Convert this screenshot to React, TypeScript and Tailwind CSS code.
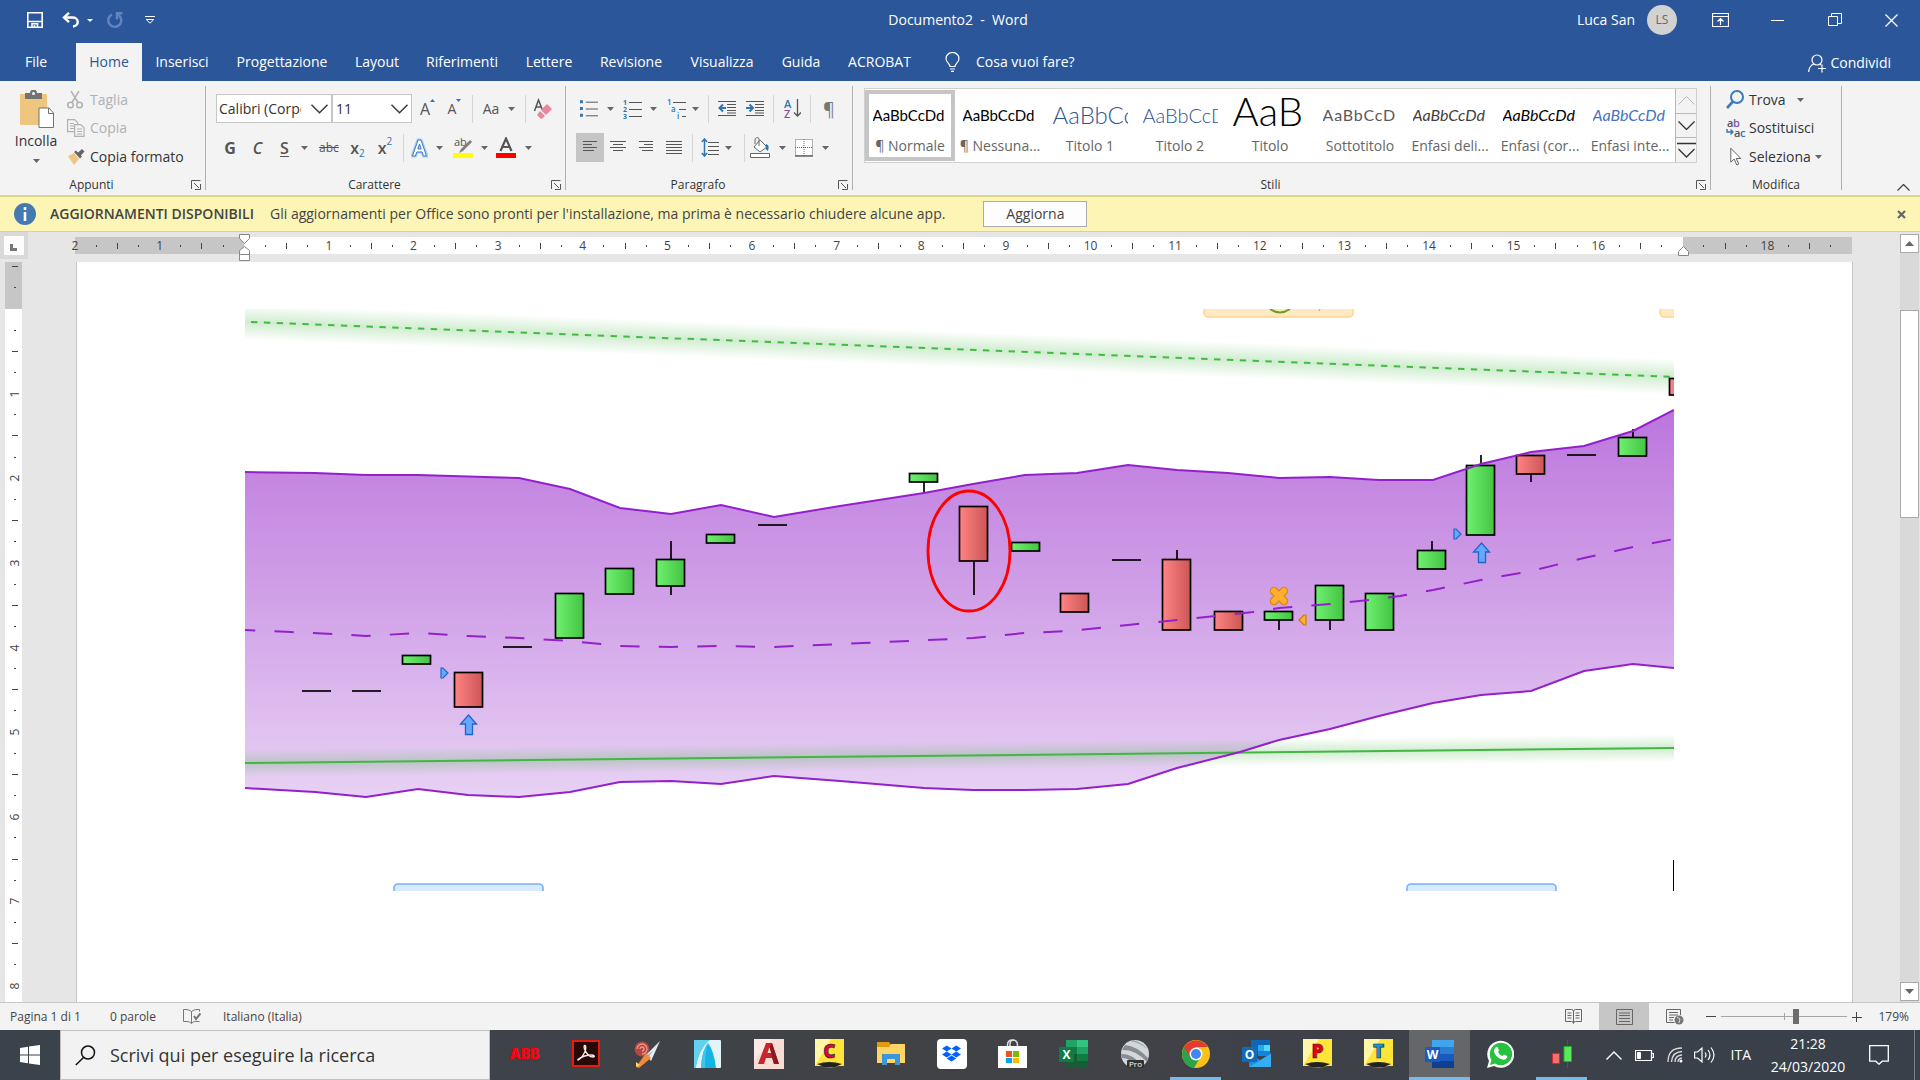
import type { ReactNode } from "react";
import { FaDropbox } from "react-icons/fa";

/* ================= TYPES ================= */

interface Tab {
  label: string;
  width: string;
}

interface StyleItem {
  name: string;
  sample: string;
  className: string;
}

interface Candle {
  x: number;
  top: number;
  bottom: number;
  up: boolean;
  high?: number;
  low?: number;
}

interface TaskApp {
  name: string;
  icon: ReactNode;
}

/* ================= DATA ================= */

const tabs: Tab[] = [
  { label: "File", width: "w-[76px] pr-1" },
  { label: "Home", width: "w-[66px]" },
  { label: "Inserisci", width: "w-[80px]" },
  { label: "Progettazione", width: "w-[120px]" },
  { label: "Layout", width: "w-[70px]" },
  { label: "Riferimenti", width: "w-[100px]" },
  { label: "Lettere", width: "w-[74px]" },
  { label: "Revisione", width: "w-[90px]" },
  { label: "Visualizza", width: "w-[92px]" },
  { label: "Guida", width: "w-[66px]" },
  { label: "ACROBAT", width: "w-[91px]" },
];

const styleItems: StyleItem[] = [
  { name: "¶ Normale", sample: "AaBbCcDd", className: "text-[15px] text-black" },
  { name: "¶ Nessuna...", sample: "AaBbCcDd", className: "text-[15px] text-black" },
  { name: "Titolo 1", sample: "AaBbCc", className: "text-2xl font-light text-[#2f5496]" },
  { name: "Titolo 2", sample: "AaBbCcD", className: "text-xl font-light text-[#2f5496]" },
  { name: "Titolo", sample: "AaB", className: "pb-2 text-[40px] font-light text-black" },
  { name: "Sottotitolo", sample: "AaBbCcD", className: "text-base tracking-wider text-[#5a5a5a]" },
  { name: "Enfasi deli...", sample: "AaBbCcDd", className: "text-base italic text-[#404040]" },
  { name: "Enfasi (cor...", sample: "AaBbCcDd", className: "text-base italic text-black" },
  { name: "Enfasi inte...", sample: "AaBbCcDd", className: "text-base italic text-[#4472c4]" },
];

const upperBand =
  "0,163 70,164 121,166 173,166 274,169 325,180 375,199 426,205 476,196 529,208 595,197 679,184 728,175 780,166 832,164 883,156 932,161 983,164 1034,169 1085,168 1134,171 1188,171 1236,155 1286,143 1339,137 1388,122 1429,101";

const lowerBand =
  "0,479 70,483 121,488 173,480 223,486 274,488 325,483 375,473 426,472 476,475 529,467 595,472 679,479 728,481 780,481 832,480 883,475 932,459 995,443 1034,431 1085,420 1134,407 1188,394 1236,386 1286,382 1339,362 1388,355 1429,359";

const middleBand =
  "0,321 46,323 88,325 121,327 173,324 223,327 274,329 325,332 375,337 426,338 476,337 529,338 618,334 728,329 780,324 825,322 883,316 932,311 1008,303 1034,299 1085,295 1125,291 1155,287 1188,281 1236,271 1286,262 1339,249 1388,238 1429,230";

const candles: Candle[] = [
  { x: 157, top: 346, bottom: 355, up: true },
  { x: 209, top: 363, bottom: 398, up: false },
  { x: 310, top: 284, bottom: 329, up: true },
  { x: 360, top: 259, bottom: 285, up: true },
  { x: 411, top: 250, bottom: 277, up: true, high: 232, low: 286 },
  { x: 461, top: 225, bottom: 234, up: true },
  { x: 664, top: 164, bottom: 173, up: true, low: 184 },
  { x: 714, top: 197, bottom: 252, up: false, low: 286 },
  { x: 766, top: 233, bottom: 242, up: true },
  { x: 815, top: 284, bottom: 303, up: false },
  { x: 917, top: 250, bottom: 321, up: false, high: 241 },
  { x: 969, top: 302, bottom: 321, up: false },
  { x: 1019, top: 302, bottom: 311, up: true, low: 321 },
  { x: 1070, top: 276, bottom: 311, up: true, low: 321 },
  { x: 1120, top: 284, bottom: 321, up: true },
  { x: 1172, top: 241, bottom: 260, up: true, high: 232 },
  { x: 1221, top: 156, bottom: 226, up: true, high: 146 },
  { x: 1271, top: 146, bottom: 165, up: false, low: 173 },
  { x: 1373, top: 128, bottom: 147, up: true, high: 120 },
  { x: 1424, top: 69, bottom: 86, up: false },
];

// candles where open and close are the same
const flatCandles = [
  [57, 382],
  [107, 382],
  [258, 338],
  [513, 216],
  [867, 251],
  [1322, 146],
];

/* ================= SMALL PIECES ================= */

function Caret({ className = "w-[14px]" }: { className?: string }) {
  return (
    <span className={`flex h-7 items-center justify-center ${className}`}>
      <svg width="7" height="4" viewBox="0 0 7 4">
        <path d="M0 0h7L3.5 4z" fill="#666" />
      </svg>
    </span>
  );
}

function Tool({
  label,
  className,
  children,
}: {
  label: string;
  className: string;
  children: ReactNode;
}) {
  return (
    <button
      aria-label={label}
      className={`flex h-[29px] shrink-0 items-center justify-center text-[#555] ${className}`}
    >
      {children}
    </button>
  );
}

function Divider() {
  return <span className="mx-1 h-7 w-px shrink-0 bg-[#d5d5d5]" />;
}

function Launcher() {
  return (
    <button aria-label="Altre opzioni" className="mr-1 ml-2 h-[10px] w-[10px]">
      <svg width="10" height="10" viewBox="0 0 10 10" fill="none" stroke="#555">
        <path d="M.5 9V.5H9.5" />
        <path d="M3 3l5 5M9.500 4v5.500H4" />
      </svg>
    </button>
  );
}

function Group({
  title,
  className,
  launcher = true,
  children,
}: {
  title: string;
  className: string;
  launcher?: boolean;
  children: ReactNode;
}) {
  return (
    <section
      className={`flex h-[104px] flex-col justify-between border-r border-[#b1b1b1] ${className}`}
    >
      {children}
      <div className="flex h-[10px] items-center">
        <h2 className="flex-1 text-center text-xs leading-4 text-[#333]">{title}</h2>
        {launcher && <Launcher />}
      </div>
    </section>
  );
}

function Lines({ rows }: { rows: [number, number][] }) {
  return (
    <svg width="17" height="14" viewBox="0 0 17 14" stroke="#555" fill="none">
      {rows.map(([from, to], i) => (
        <path key={i} d={`M${from} ${i * 3 + 0.5}H${to}`} />
      ))}
    </svg>
  );
}

/* ================= TITLE BAR + TABS ================= */

function TitleBar() {
  return (
    <header className="flex h-10 items-center text-white">
      <div className="flex flex-1 items-center">
        <button aria-label="Salva" className="ml-[27px]">
          <svg width="16" height="16" viewBox="0 0 16 16" fill="none" stroke="#fff" strokeWidth="1.600">
            <path d="M.8.8h14.400v14.400H.8zM.8 9.500h14.400" />
            <path d="M5 15.200v-3.500h5.500v3.500M7.500 13v2" />
          </svg>
        </button>
        <button aria-label="Annulla" className="ml-[19px]">
          <svg width="18" height="16" viewBox="0 0 18 16" fill="none" stroke="#fff" strokeWidth="2.400">
            <path d="M2 5.500h8.500a5 4.500 0 0 1 .5 9" />
            <path d="M7 .8L2 5.500l5 4.700" />
          </svg>
        </button>
        <svg className="ml-[7px]" width="6" height="3" viewBox="0 0 6 3">
          <path d="M0 0h6L3 3z" fill="#fff" />
        </svg>
        <button aria-label="Ripeti" className="ml-[14px]">
          <svg width="16" height="17" viewBox="0 0 16 17" fill="none" stroke="#6385bd" strokeWidth="2.400">
            <path d="M5 2.500a6.500 6.500 0 1 0 6 .2" />
            <path d="M15.500 1.300H10v6" />
          </svg>
        </button>
        <button aria-label="Personalizza barra" className="ml-[22px]">
          <svg width="10" height="8" viewBox="0 0 10 8" fill="none" stroke="#fff">
            <path d="M0 .5h10M1.200 3.500h7.600L5 7.200z" />
          </svg>
        </button>
      </div>
      <h1 className="pr-1 text-sm whitespace-pre">Documento2  -  Word</h1>
      <div className="flex flex-1 items-center justify-end">
        <span className="text-sm">Luca San</span>
        <span className="mr-[15px] ml-3 flex h-[30px] w-[30px] items-center justify-center rounded-full bg-[#d2d2d2] text-xs text-[#666]">
          LS
        </span>
        <button aria-label="Opzioni barra multifunzione" className="flex w-[57px] justify-center">
          <svg width="17" height="14" viewBox="0 0 17 14" fill="none" stroke="#fff">
            <path d="M.5.5h16v13H.5zM.5 3.500h16M8.500 12V6M5.500 8.500l3-3 3 3" strokeWidth="1.200" />
          </svg>
        </button>
        <button aria-label="Riduci a icona" className="flex w-[57px] justify-center">
          <span className="h-px w-[13px] bg-white" />
        </button>
        <button aria-label="Ripristina" className="flex w-[57px] justify-center">
          <svg width="14" height="14" viewBox="0 0 14 14" fill="none" stroke="#fff">
            <path d="M.5 3.500h9v9h-9zM3.500 3V.5h10v10H10" />
          </svg>
        </button>
        <button aria-label="Chiudi" className="flex w-[57px] justify-center">
          <svg width="13" height="13" viewBox="0 0 13 13" stroke="#fff" strokeWidth="1.300">
            <path d="M.5.5l12 12M12.500.5l-12 12" />
          </svg>
        </button>
      </div>
    </header>
  );
}

function TabBar() {
  return (
    <nav className="flex h-[41px] items-end text-sm text-white">
      {tabs.map((tab) => (
        <button
          key={tab.label}
          className={`h-[38px] shrink-0 ${tab.width} ${
            tab.label === "Home" ? "bg-[#f3f3f3] text-[#2b579a]" : ""
          }`}
        >
          {tab.label}
        </button>
      ))}
      <button className="ml-5 flex h-[38px] items-center gap-4">
        <svg width="15" height="20" viewBox="0 0 15 20" fill="none" stroke="#fff" strokeWidth="1.200">
          <path d="M5 14.500c0-3-4-4-4-8a6.500 6 0 0 1 13 0c0 4-4 5-4 8zM5 17h5M6 19.300h3" />
        </svg>
        Cosa vuoi fare?
      </button>
      <button className="mr-[29px] ml-auto flex h-9 items-center gap-1">
        <svg width="18" height="19" viewBox="0 0 18 19" fill="none" stroke="#fff" strokeWidth="1.200">
          <circle cx="9" cy="6" r="5" />
          <path d="M.6 18c.4-4 2-7 5.400-8M12 10l1 1M14 10.500v8M10 14.500h8" />
        </svg>
        Condividi
      </button>
    </nav>
  );
}

/* ================= RIBBON ================= */

function ClipboardGroup() {
  return (
    <Group title="Appunti" className="w-[206px]">
      <div className="flex">
        <button className="flex w-[64px] shrink-0 flex-col items-center pt-1 pl-2 text-sm text-[#333]">
          <svg width="35" height="38" viewBox="0 0 35 38">
            <rect x="1" y="4" width="27" height="31" rx="1" fill="#eec67f" />
            <path d="M6 3h5a3.500 3.500 0 0 1 7 0h5v6H6z" fill="#737373" />
            <circle cx="14.500" cy="3.500" r="1.500" fill="#f3f3f3" />
            <path d="M20 18h10l4.500 5v14.500H20z" fill="#fff" stroke="#737373" />
            <path d="M29.500 18v5.500h5" fill="none" stroke="#737373" />
          </svg>
          <span className="mt-[3px] leading-5">Incolla</span>
          <Caret className="-mt-1 w-4" />
        </button>
        <div className="flex flex-col text-sm">
          <button className="flex h-[27px] items-center gap-[7px] text-[#b1b1b1]">
            <svg className="ml-[3px]" width="16" height="18" viewBox="0 0 16 18" fill="none" stroke="#b1b1b1" strokeWidth="1.500">
              <circle cx="3.500" cy="14" r="2.800" />
              <circle cx="12.500" cy="14" r="2.800" />
              <path d="M5 11.500L12 0M11 11.500L4 0" />
            </svg>
            Taglia
          </button>
          <button className="flex h-[29px] items-center gap-[5px] text-[#b1b1b1]">
            <svg className="ml-[3px]" width="18" height="18" viewBox="0 0 18 18" fill="#f3f3f3" stroke="#b1b1b1" strokeWidth="1.200">
              <path d="M.6.6h7l3 3v9H.6zM3 4.500h4M3 7h4M3 9.500h4" />
              <path d="M7.600 5.600h6l3.400 3v8.800H7.600zM10 10h5M10 12.500h5M10 15h5" />
            </svg>
            Copia
          </button>
          <button className="flex h-[29px] items-center gap-[5px] text-[#333]">
            <svg className="ml-[3px]" width="18" height="16" viewBox="0 0 18 16">
              <path d="M1 7l6-3 5 6-5 6z" fill="#eec67f" />
              <path d="M7 3l2-1.500 6 6-2 2z" fill="#666" />
              <path d="M10.500 4L15 0l2.500 2.500-4 4.500z" fill="#666" />
            </svg>
            Copia formato
          </button>
        </div>
      </div>
    </Group>
  );
}

function ComboArrow() {
  return (
    <svg className="pointer-events-none -ml-[21px] shrink-0" width="17" height="10" viewBox="0 0 17 10" fill="none" stroke="#333" strokeWidth="1.400">
      <path d="M.5.8l8 8 8-8" />
    </svg>
  );
}

function FontGroup() {
  return (
    <Group title="Carattere" className="w-[360px]">
      <div className="pl-[10px]">
        <div className="flex items-center pt-2">
          <div className="flex w-[116px] items-center">
            <select
              aria-label="Tipo di carattere"
              className="h-[29px] w-full appearance-none border border-[#c6c6c6] bg-white pr-[30px] pl-[2px] text-sm text-[#333]"
            >
              <option>Calibri (Corpo)</option>
            </select>
            <ComboArrow />
          </div>
          <div className="flex w-[80px] items-center">
            <select
              aria-label="Dimensione carattere"
              className="h-[29px] w-full appearance-none border border-[#c6c6c6] bg-white pl-[3px] text-sm text-[#333]"
            >
              <option>11</option>
            </select>
            <ComboArrow />
          </div>
          <Tool label="Aumenta dimensione" className="ml-[2px] w-[27px]">
            <span className="text-base">A</span>
            <svg className="mb-4" width="5" height="3" viewBox="0 0 5 3">
              <path d="M0 3h5L2.500 0z" fill="#2e75b6" />
            </svg>
          </Tool>
          <Tool label="Riduci dimensione" className="w-[27px]">
            <span className="pt-px text-sm">A</span>
            <svg className="mb-4" width="5" height="3" viewBox="0 0 5 3">
              <path d="M0 0h5L2.500 3z" fill="#2e75b6" />
            </svg>
          </Tool>
          <Divider />
          <Tool label="Maiuscole/minuscole" className="ml-1 w-[40px]">
            <span className="text-sm">Aa</span>
            <Caret className="ml-1 w-4" />
          </Tool>
          <Divider />
          <Tool label="Cancella formattazione" className="w-[26px]">
            <svg width="20" height="22" viewBox="0 0 20 22">
              <path d="M1.500 13L5.500 2l4 10M3 9h5" fill="none" stroke="#555" strokeWidth="1.500" />
              <path d="M14 6l5 5-6 6-5-5z" fill="#e8879c" />
              <path d="M7 13l5 5-2 2-2 1-4-4z" fill="#e8879c" />
            </svg>
          </Tool>
        </div>
        <div className="mt-[10px] flex items-center">
          <Tool label="Grassetto" className="w-[28px]">
            <span className="text-base font-bold">G</span>
          </Tool>
          <Tool label="Corsivo" className="w-[27px]">
            <span className="text-base font-semibold italic">C</span>
          </Tool>
          <Tool label="Sottolineato" className="w-[43px]">
            <span className="ml-2 text-base font-semibold underline underline-offset-2">S</span>
            <Caret className="ml-2 w-4" />
          </Tool>
          <Tool label="Barrato" className="w-[30px]">
            <span className="text-xs line-through">abc</span>
          </Tool>
          <Tool label="Pedice" className="w-[27px]">
            <span className="text-base font-semibold">x</span>
            <span className="pt-3 text-[10px] text-[#2e75b6]">2</span>
          </Tool>
          <Tool label="Apice" className="w-[28px]">
            <span className="text-base font-semibold">x</span>
            <span className="pb-3 text-[10px] text-[#2e75b6]">2</span>
          </Tool>
          <Divider />
          <Tool label="Effetti testo" className="w-[42px]">
            <svg width="17" height="20" viewBox="0 0 17 20">
              <path d="M1 18L7 2h3l6 16h-3.500l-1.400-4H5.800l-1.400 4zM6.800 11h3.400L8.500 6z" fill="#fff" stroke="#a9cdf0" strokeWidth="3" />
              <path d="M1.500 18L7 2h3l5.500 16h-3l-1.400-4H5.800l-1.400 4zM6.800 11h3.400L8.500 6z" fill="#fff" stroke="#3a7cc4" />
            </svg>
            <Caret className="ml-1 w-4" />
          </Tool>
          <Tool label="Evidenziatore" className="w-[45px]">
            <svg width="20" height="22" viewBox="0 0 20 22">
              <text x="1" y="9" fontSize="11" fill="#555">ab</text>
              <path d="M17 3l2 2-9 9-4 2 2-4z" fill="#808080" />
              <rect y="16" width="20" height="5" fill="#ff0" />
            </svg>
            <Caret className="ml-1 w-4" />
          </Tool>
          <Tool label="Colore carattere" className="w-[42px]">
            <svg width="20" height="22" viewBox="0 0 20 22">
              <path d="M4.500 14L10 1.500 15.500 14M6.500 10h7" fill="none" stroke="#555" strokeWidth="2.200" />
              <rect y="16" width="20" height="5" fill="#f00" />
            </svg>
            <Caret className="ml-1 w-4" />
          </Tool>
        </div>
      </div>
    </Group>
  );
}

function ParagraphGroup() {
  return (
    <Group title="Paragrafo" className="w-[287px]">
      <div className="pl-[10px]">
        <div className="flex items-center pt-2">
          <Tool label="Elenco puntato" className="w-[42px] pl-1">
            <svg width="19" height="18" viewBox="0 0 19 18">
              <path d="M0 0h3v3H0zM0 7h3v3H0zM0 14h3v3H0z" fill="#2e75b6" />
              <path d="M6 2h13M6 9h13M6 16h13" stroke="#555" />
            </svg>
            <Caret className="ml-1 w-4" />
          </Tool>
          <Tool label="Elenco numerato" className="w-[44px] pl-1">
            <svg width="19" height="20" viewBox="0 0 19 20">
              <g fontSize="7" fontWeight="700" fill="#2e75b6">
                <text x="0" y="6">1</text>
                <text x="0" y="13">2</text>
                <text x="0" y="20">3</text>
              </g>
              <path d="M6 3.500h13M6 10.500h13M6 17.500h13" stroke="#555" />
            </svg>
            <Caret className="ml-1 w-4" />
          </Tool>
          <Tool label="Elenco a più livelli" className="w-[42px] pl-1">
            <svg width="19" height="20" viewBox="0 0 19 20">
              <g fontSize="8" fontWeight="600" fill="#2e75b6">
                <text x="0" y="6">1</text>
                <text x="4" y="13">a</text>
                <text x="10" y="20">i</text>
              </g>
              <path d="M6 3.500h13M12 10.500h7M15 17.500h4" stroke="#555" />
            </svg>
            <Caret className="ml-px w-4" />
          </Tool>
          <Divider />
          <Tool label="Riduci rientro" className="w-[28px]">
            <svg width="18" height="17" viewBox="0 0 18 17">
              <path d="M0 1.500h18M9 4.500h9M9 7.500h9M9 10.500h9M0 15.500h18M9 13h9" stroke="#555" />
              <path d="M8 8H2M5 4.500L1.500 8 5 11.500" fill="none" stroke="#2e75b6" strokeWidth="2" />
            </svg>
          </Tool>
          <Tool label="Aumenta rientro" className="w-[28px]">
            <svg width="18" height="17" viewBox="0 0 18 17">
              <path d="M0 1.500h18M9 4.500h9M9 7.500h9M9 10.500h9M0 15.500h18M9 13h9" stroke="#555" />
              <path d="M0 8h6M3.500 4.500L7 8l-3.500 3.500" fill="none" stroke="#2e75b6" strokeWidth="2" />
            </svg>
          </Tool>
          <Divider />
          <Tool label="Ordina" className="w-[28px]">
            <svg width="17" height="19" viewBox="0 0 17 19">
              <text x="0" y="9" fontSize="11" fontWeight="600" fill="#2e75b6">A</text>
              <text x="0" y="19" fontSize="11" fontWeight="600" fill="#8151a8">Z</text>
              <path d="M13.500 0v17M10 13.500l3.500 3.500 3.500-3.500" fill="none" stroke="#555" strokeWidth="1.300" />
            </svg>
          </Tool>
          <Divider />
          <Tool label="Mostra tutto" className="w-[28px]">
            <span className="text-lg text-[#777]">¶</span>
          </Tool>
        </div>
        <div className="mt-[10px] flex items-center">
          <Tool label="Allinea a sinistra" className="w-[28px] bg-[#c5c5c5]">
            <Lines rows={[[1, 15], [1, 10], [1, 15], [1, 12]]} />
          </Tool>
          <Tool label="Centra" className="w-[28px]">
            <Lines rows={[[0, 16], [3, 13], [0, 16], [3, 13]]} />
          </Tool>
          <Tool label="Allinea a destra" className="w-[28px]">
            <Lines rows={[[1, 15], [6, 15], [1, 15], [4, 15]]} />
          </Tool>
          <Tool label="Giustifica" className="w-[28px]">
            <Lines rows={[[0, 16], [0, 16], [0, 16], [0, 16], [0, 16]]} />
          </Tool>
          <Divider />
          <Tool label="Interlinea" className="w-[43px]">
            <svg width="18" height="19" viewBox="0 0 18 19">
              <path d="M3.500 1v17M.8 4l2.700-3 2.700 3M.8 15l2.700 3 2.700-3" fill="none" stroke="#2e75b6" strokeWidth="1.500" />
              <path d="M7 4.500h11M7 8.500h11M7 12.500h11M7 16.500h11" stroke="#555" />
            </svg>
            <Caret className="ml-px w-4" />
          </Tool>
          <Divider />
          <Tool label="Sfondo" className="w-[42px]">
            <svg width="20" height="21" viewBox="0 0 20 21">
              <path d="M10 3l7 7-7 5-6-5z" fill="#fff" stroke="#666" />
              <path d="M9 9V2c0-2-4-2-4 1v4" fill="none" stroke="#666" />
              <path d="M16 7c3 1 3 3 2 7-2-1-3-3-2-7z" fill="#2e75b6" />
              <path d="M.5 16.500h19v4H.5z" fill="#fff" stroke="#666" />
            </svg>
            <Caret className="ml-1 w-4" />
          </Tool>
          <Tool label="Bordi" className="ml-px w-[44px]">
            <svg width="18" height="18" viewBox="0 0 18 18" fill="#fff" stroke="#666">
              <path d="M.5.5h17v16H.5z" strokeDasharray="1 1" />
              <path d="M9 0v17M0 8.500h18" strokeDasharray="1 1" />
              <path d="M0 17h18" strokeWidth="1.500" />
            </svg>
            <Caret className="ml-1 w-4" />
          </Tool>
        </div>
      </div>
    </Group>
  );
}

function StylesGroup() {
  return (
    <Group title="Stili" className="min-w-0 flex-1">
      <div className="mt-[2px] mr-[13px] ml-[11px] flex h-[75px] border border-[#d0d0d0] bg-white">
        <div className="flex min-w-0 flex-1 overflow-hidden">
          {styleItems.map((item, i) => (
            <button
              key={item.name}
              className={`mt-px flex h-[71px] w-[90px] shrink-0 flex-col justify-between border-4 pb-[3px] ${
                i === 0 ? "border-[#c5c5c5]" : "border-transparent"
              }`}
            >
              <span
                className={`flex h-[42px] w-[75px] items-center self-center overflow-hidden font-[Lato,sans-serif] leading-none whitespace-nowrap ${item.className}`}
              >
                {item.sample}
              </span>
              <span className="self-center text-sm leading-4 whitespace-nowrap text-[#666]">{item.name}</span>
            </button>
          ))}
        </div>
        <div className="flex w-[21px] flex-col border-l border-[#b8b8b8] bg-[#f3f3f3]">
          <button aria-label="Su" className="flex flex-1 items-center justify-center">
            <svg width="17" height="9" viewBox="0 0 17 9" fill="none" stroke="#b8b8b8">
              <path d="M.5 8.500l8-8 8 8" />
            </svg>
          </button>
          <button aria-label="Giù" className="flex flex-1 items-center justify-center border-y border-[#b8b8b8]">
            <svg width="17" height="9" viewBox="0 0 17 9" fill="none" stroke="#333" strokeWidth="1.300">
              <path d="M.5.5l8 8 8-8" />
            </svg>
          </button>
          <button aria-label="Altro" className="flex flex-1 items-center justify-center">
            <svg width="19" height="17" viewBox="0 0 19 17" fill="none" stroke="#333" strokeWidth="1.300">
              <path d="M0 1.500h19M1.500 7l8 8 8-8" />
            </svg>
          </button>
        </div>
      </div>
    </Group>
  );
}

function EditGroup() {
  return (
    <Group title="Modifica" className="w-[131px]" launcher={false}>
      <div className="flex flex-col pl-[15px] text-sm text-[#333]">
        <button className="flex h-[27px] items-center gap-[5px]">
          <svg width="18" height="19" viewBox="0 0 18 19" fill="none" stroke="#3f7ab8" strokeWidth="2">
            <circle cx="11" cy="7" r="6" />
            <path d="M7 11.500L1 18" strokeWidth="2.600" />
          </svg>
          Trova
          <Caret className="ml-[2px] w-4" />
        </button>
        <button className="flex h-[29px] items-center gap-[3px]">
          <svg width="20" height="20" viewBox="0 0 20 20" fontSize="11" fontWeight="600">
            <text x="1" y="9" fill="#555">a</text>
            <text x="7" y="9" fill="#8151a8">b</text>
            <text x="8" y="19" fill="#555">a</text>
            <text x="14" y="19" fill="#2e75b6">c</text>
            <path d="M1 11v3h6M4.500 11.500L7 14l-2.500 2.500" fill="none" stroke="#2e75b6" strokeWidth="1.400" />
          </svg>
          Sostituisci
        </button>
        <button className="flex h-[29px] items-center">
          <svg className="mr-[7px] ml-1" width="12" height="19" viewBox="0 0 12 19" fill="#fff" stroke="#666">
            <path d="M.8 1.200v14l3.400-3.200 2.600 6 2-1-2.600-5.500h4.600z" />
          </svg>
          Seleziona
          <Caret className="w-4" />
        </button>
      </div>
    </Group>
  );
}

function Ribbon() {
  return (
    <div className="flex h-[115px] border-b border-[#d0d0d0] bg-[#f3f3f3] pt-[5px]">
      <ClipboardGroup />
      <FontGroup />
      <ParagraphGroup />
      <StylesGroup />
      <EditGroup />
      <div className="flex w-[78px] items-end justify-end pr-[10px] pb-[4px]">
        <button aria-label="Comprimi barra">
          <svg width="13" height="7" viewBox="0 0 13 7" fill="none" stroke="#444" strokeWidth="1.300">
            <path d="M.5 6.500l6-6 6 6" />
          </svg>
        </button>
      </div>
    </div>
  );
}

function UpdateBar() {
  return (
    <div className="flex h-9 shrink-0 items-center border-y border-[#d9d587] bg-[#fcf5b6] pl-[14px] text-sm text-[#444]">
      <svg width="22" height="22" viewBox="0 0 22 22">
        <circle cx="11" cy="11" r="11" fill="#4579b2" />
        <path d="M11 4v3M11 9v9" stroke="#fff" strokeWidth="2.600" />
      </svg>
      <strong className="ml-[14px] font-semibold">AGGIORNAMENTI DISPONIBILI</strong>
      <span className="ml-4">
        Gli aggiornamenti per Office sono pronti per l'installazione, ma prima è necessario chiudere alcune app.
      </span>
      <button className="ml-[38px] h-[26px] w-[104px] border border-[#ababab] bg-[#fdfdfd]">Aggiorna</button>
      <button aria-label="Chiudi avviso" className="mr-[14px] ml-auto">
        <svg width="9" height="9" viewBox="0 0 9 9" stroke="#666" strokeWidth="2.200">
          <path d="M1 1l7 7M8 1L1 8" />
        </svg>
      </button>
    </div>
  );
}

/* ================= RULERS ================= */

function HorizontalMark({ quarter }: { quarter: number }) {
  const step = Math.abs(quarter) % 4;
  if (quarter === 0 || quarter === 68) return null;
  if (step === 0) return <span>{Math.abs(quarter) / 4}</span>;
  return <span className={`w-px shrink-0 bg-[#444] ${step === 2 ? "h-[6px]" : "h-[2px]"}`} />;
}

function HorizontalPart({ from, to, className }: { from: number; to: number; className: string }) {
  const quarters = Array.from({ length: to - from }, (_, i) => from + i);
  return (
    <div className={`flex h-[17px] ${className}`}>
      {quarters.map((quarter) => (
        <div key={quarter} className="min-w-0 flex-1">
          <div className="flex h-full w-0 items-center justify-center">
            <HorizontalMark quarter={quarter} />
          </div>
        </div>
      ))}
    </div>
  );
}

function HorizontalRuler() {
  return (
    <div className="-mr-5 flex h-[30px] shrink-0">
      <button
        aria-label="Tabulazione"
        className="flex h-[27px] w-[28px] shrink-0 items-center justify-center border-4 border-[#d9d9d9] bg-[#fcfcfc]"
      >
        <span className="mt-1 mr-px h-[7px] w-[7px] border-b-3 border-l-3 border-[#777]" />
      </button>
      <div className="relative mt-[5px] ml-[47px] flex h-[17px] flex-1 text-xs text-[#444]">
        <HorizontalPart from={-8} to={0} className="flex-[8] bg-[#c6c6c6]" />
        <HorizontalPart from={0} to={68} className="flex-[68] bg-white" />
        <HorizontalPart from={68} to={76} className="flex-[8] bg-[#c6c6c6]" />
        <svg
          className="absolute -top-[3px] left-[9.523%] -ml-[5px]"
          width="11"
          height="28"
          viewBox="0 0 11 28"
          fill="#fff"
          stroke="#888"
        >
          <path d="M.5.5h10v4l-5 5-5-5zM.5 20.500h10v-4l-5-4-5 4zM.5 20.500h10v6H.5z" />
        </svg>
        <svg
          className="absolute top-[9px] left-[90.477%] -ml-[5px]"
          width="11"
          height="11"
          viewBox="0 0 11 11"
          fill="#fff"
          stroke="#888"
        >
          <path d="M.5 9.500h10v-4l-5-5-5 5z" />
        </svg>
      </div>
      <div className="w-[68px] shrink-0" />
    </div>
  );
}

function VerticalMark({ quarter }: { quarter: number }) {
  const step = Math.abs(quarter) % 4;
  if (quarter === 0) return null;
  if (step === 0) return <span className="-rotate-90 leading-none">{quarter / 4}</span>;
  return <span className={`h-px bg-[#444] ${step === 2 ? "w-[6px]" : "w-[2px]"}`} />;
}

function VerticalRuler() {
  return (
    <div className="ml-[5px] flex w-[17px] shrink-0 flex-col text-xs text-[#444]">
      <div className="h-[47px] shrink-0 bg-[#c6c6c6] pt-1">
        {[-2, -1].map((quarter) => (
          <div key={quarter} className="h-[21px]">
            <div className="ml-[3px] flex h-0 w-[14px] items-center justify-center">
              <VerticalMark quarter={quarter} />
            </div>
          </div>
        ))}
      </div>
      <div className="flex min-h-0 flex-1 flex-col bg-white">
        {Array.from({ length: 33 }, (_, quarter) => (
          <div key={quarter} className={`min-h-0 ${quarter === 32 ? "flex-[3]" : "flex-[4]"}`}>
            <div className="ml-[3px] flex h-0 w-[14px] items-center justify-center">
              <VerticalMark quarter={quarter} />
            </div>
          </div>
        ))}
      </div>
    </div>
  );
}

/* ================= CHART ================= */

function BuyArrow({ x, y }: { x: number; y: number }) {
  return (
    <path
      transform={`translate(${x} ${y})`}
      d="M.5 0l8 9h-4v10.500h-7V9h-5z"
      fill="#66a8ff"
      stroke="#1f66cc"
      strokeWidth="1.300"
    />
  );
}

function Chart() {
  const lowerReversed = lowerBand.split(" ").reverse().join(" ");

  return (
    <svg className="block w-full" viewBox="0 0 1429 582" role="img" aria-label="Grafico a candele">
      <defs>
        <linearGradient id="band" gradientUnits="userSpaceOnUse" x1="0" y1="100" x2="0" y2="490">
          <stop offset="0" stopColor="#bb74dd" />
          <stop offset="0.170" stopColor="#c486e1" />
          <stop offset="0.500" stopColor="#d1a2e8" />
          <stop offset="1" stopColor="#e8d2f4" />
        </linearGradient>
        <linearGradient id="glow" x1="0" y1="0" x2="0" y2="1">
          <stop offset="0" stopColor="#3cb43c" stopOpacity="0" />
          <stop offset="0.500" stopColor="#3cb43c" stopOpacity="0.240" />
          <stop offset="1" stopColor="#3cb43c" stopOpacity="0" />
        </linearGradient>
        <linearGradient id="up">
          <stop offset="0" stopColor="#70f070" />
          <stop offset="1" stopColor="#42c442" />
        </linearGradient>
        <linearGradient id="down">
          <stop offset="0" stopColor="#ff8484" />
          <stop offset="1" stopColor="#cc5555" />
        </linearGradient>
      </defs>

      <polygon points={`${upperBand} ${lowerReversed}`} fill="url(#band)" />

      <rect y="-5" width="1429" height="36" fill="url(#glow)" transform="skewY(2.200)" />
      <path d="M6 13L1429 68" stroke="#43bb43" strokeWidth="2" strokeDasharray="6.400 6.450" />
      <rect y="440" width="1429" height="28" fill="url(#glow)" transform="skewY(-0.600)" />
      <path d="M0 454L1429 439" stroke="#43b643" strokeWidth="2" />

      {candles.map((candle) => (
        <g key={candle.x} stroke="#000" strokeWidth="1.700">
          <path
            d={`M${candle.x + 15} ${candle.high ?? candle.top}V${candle.low ?? candle.bottom}`}
          />
          <rect
            x={candle.x + 0.5}
            y={candle.top + 0.5}
            width="28"
            height={candle.bottom - candle.top - 0.5}
            fill={candle.up ? "url(#up)" : "url(#down)"}
          />
        </g>
      ))}
      {flatCandles.map(([x, y]) => (
        <path key={x} d={`M${x} ${y}h29`} stroke="#000" strokeWidth="1.700" />
      ))}

      <g fill="none" stroke="#9420cc" strokeWidth="2">
        <polyline points={upperBand} />
        <polyline points={lowerBand} />
        <polyline points={middleBand} strokeDasharray="19.300 19.200" strokeDashoffset="9" />
      </g>

      <ellipse cx="724" cy="242" rx="41" ry="60" fill="none" stroke="#f00" strokeWidth="2.800" />

      <BuyArrow x={223} y={406} />
      <BuyArrow x={1236} y={234} />
      <path d="M196 359v10l2 0 5-5-5-5z" fill="#66a8ff" stroke="#1f66cc" strokeWidth="1.200" />
      <path d="M1209 220v10l2 0 5-5-5-5z" fill="#66a8ff" stroke="#1f66cc" strokeWidth="1.200" />
      <path d="M1061 306v10l-2 0-5-5 5-5z" fill="#ffb02e" stroke="#d07a00" strokeWidth="1.200" />
      <path
        d="M1029 282l10 10M1039 282l-10 10"
        stroke="#d98a10"
        strokeWidth="8.500"
        strokeLinecap="round"
      />
      <path
        d="M1029 282l10 10M1039 282l-10 10"
        stroke="#ffaf2e"
        strokeWidth="6"
        strokeLinecap="round"
      />

      {/* signal labels cut off by the picture's edge */}
      <g fill="#ffe9c4" stroke="#ffd58c" strokeWidth="1.500">
        <rect x="959" y="-20" width="149" height="28" rx="4" />
        <rect x="1415" y="-20" width="149" height="28" rx="4" />
      </g>
      <path d="M1025 0q10 7 20 0" fill="none" stroke="#6f9c1c" strokeWidth="2" />
      <path d="M1074 2l1-2" stroke="#b5a878" />
      <g fill="#d8eaff" stroke="#7aaeff" strokeWidth="1.600">
        <rect x="149" y="575" width="149" height="28" rx="4" />
        <rect x="1162" y="575" width="149" height="28" rx="4" />
      </g>
    </svg>
  );
}

/* ================= WORK AREA ================= */

function ScrollBar() {
  return (
    <div className="mr-px flex w-[19px] shrink-0 flex-col bg-[#d9d9d9]">
      <button
        aria-label="Scorri su"
        className="flex h-[19px] items-center justify-center border border-[#ababab] bg-white"
      >
        <svg width="9" height="5" viewBox="0 0 9 5">
          <path d="M0 5h9L4.500 0z" fill="#666" />
        </svg>
      </button>
      <div className="mt-[57px] h-[208px] border border-[#ababab] bg-white" />
      <button
        aria-label="Scorri giù"
        className="mt-auto mb-px flex h-[19px] items-center justify-center border border-[#ababab] bg-white"
      >
        <svg width="9" height="5" viewBox="0 0 9 5">
          <path d="M0 0h9L4.500 5z" fill="#666" />
        </svg>
      </button>
    </div>
  );
}

function WorkArea() {
  return (
    <main className="flex min-h-0 flex-1 bg-[#e6e6e6]">
      <div className="flex min-w-0 flex-1 flex-col">
        <HorizontalRuler />
        <div className="flex min-h-0 flex-1">
          <VerticalRuler />
          <div className="mr-[47px] ml-[54px] flex min-w-0 flex-1 items-start overflow-hidden border-x border-[#c6c6c6] bg-white pt-[47px] pr-[178px] pl-[168px]">
            <div className="flex w-full items-end">
              <Chart />
              <span className="-ml-px h-[31px] w-px shrink-0 bg-black" />
            </div>
          </div>
        </div>
      </div>
      <div className="flex pt-[2px]">
        <ScrollBar />
      </div>
    </main>
  );
}

function StatusBar() {
  return (
    <footer className="flex h-7 shrink-0 items-center border-t border-[#c6c6c6] bg-[#f3f3f3] text-xs text-[#444]">
      <span className="ml-[10px] w-[100px]">Pagina 1 di 1</span>
      <span className="w-[73px]">0 parole</span>
      <button aria-label="Controllo ortografia" className="w-10">
        <svg width="18" height="15" viewBox="0 0 18 15" fill="none" stroke="#777">
          <path d="M8.500 2.500v12M8.500 2.500Q6 .5 3 .5H.5v12H4q3 0 4.500 2 1.500-2 4-2h4M8.500 2.500Q11 .5 14 .5h2.500v2" />
          <path d="M11 7l2 3 4.500-5.500" strokeWidth="2" />
        </svg>
      </button>
      <span>Italiano (Italia)</span>
      <div className="ml-auto flex h-full items-center">
        <button aria-label="Modalità lettura" className="flex w-[51px] justify-center">
          <svg width="17" height="15" viewBox="0 0 17 15" fill="none" stroke="#666">
            <path d="M.5.5h6q2 0 2 2 0-2 2-2h6v12h-6q-2 0-2 2 0-2-2-2h-6zM8.500 2v12" />
            <path d="M2.500 4h4M2.500 6.500h4M2.500 9h4M10.500 4h4M10.500 6.500h4M10.500 9h4" />
          </svg>
        </button>
        <button aria-label="Layout di stampa" className="flex h-full w-[50px] items-center justify-center bg-[#c6c6c6]">
          <svg width="17" height="16" viewBox="0 0 17 16" fill="none" stroke="#666">
            <path d="M.5.5h16v15H.5zM3 4h11M3 6.500h11M3 9.500h11M3 12.500h11" />
          </svg>
        </button>
        <button aria-label="Layout Web" className="flex w-[51px] justify-center">
          <svg width="18" height="16" viewBox="0 0 18 16" fill="none" stroke="#666">
            <path d="M14.500 6V.5H.5v13h8M3 3.500h9M3 6h9M3 8.500h5M3 11h4" />
            <circle cx="13" cy="11" r="4.500" fill="#777" stroke="none" />
            <path d="M11 8l3 2-1 4" stroke="#ddd" />
          </svg>
        </button>
        <button aria-label="Zoom indietro" className="ml-[6px] h-px w-[10px] bg-[#444]" />
        <div className="relative mx-[5px] flex items-center">
          <input
            type="range"
            aria-label="Zoom"
            min={0}
            max={100}
            defaultValue={60}
            className="h-4 w-[126px] appearance-none bg-transparent [&::-webkit-slider-runnable-track]:h-px [&::-webkit-slider-runnable-track]:bg-[#a6a6a6] [&::-webkit-slider-thumb]:-mt-[7px] [&::-webkit-slider-thumb]:h-[15px] [&::-webkit-slider-thumb]:w-[6px] [&::-webkit-slider-thumb]:appearance-none [&::-webkit-slider-thumb]:bg-[#6d6d6d]"
          />
          <span className="absolute left-1/2 h-[7px] w-px bg-[#a6a6a6]" />
        </div>
        <button aria-label="Zoom avanti">
          <svg width="10" height="10" viewBox="0 0 10 10" stroke="#444">
            <path d="M0 5.500h10M4.500 0v10" />
          </svg>
        </button>
        <span className="mr-[11px] ml-4">179%</span>
      </div>
    </footer>
  );
}

/* ================= TASKBAR ================= */

function LetterIcon({ letter, color }: { letter: string; color: string }) {
  return (
    <svg width="29" height="29" viewBox="0 0 29 29">
      <rect width="29" height="27" fill="#ffe43a" />
      <path d="M0 0h16L0 27z" fill="#fff6a8" />
      <path d="M2 25q12-4 25 0-12 7-25 0z" fill="#222" />
      <path d="M2 26q12 5 25 0-12 6-25 0z" fill="#e8cf00" />
      <text
        x="14.500"
        y="19"
        textAnchor="middle"
        fontSize="19"
        fontWeight="800"
        fill={color}
        stroke="#222"
        strokeWidth="0.600"
      >
        {letter}
      </text>
    </svg>
  );
}

function OfficeBadge({ letter, color }: { letter: string; color: string }) {
  return (
    <>
      <rect y="7" width="15" height="15" rx="1" fill={color} />
      <text x="7.500" y="19" textAnchor="middle" fontSize="12" fontWeight="700" fill="#fff">
        {letter}
      </text>
    </>
  );
}

const taskApps: TaskApp[] = [
  {
    name: "ABB",
    icon: (
      <span className="font-[Inter,sans-serif] text-sm font-black text-[#ff000f]">ABB</span>
    ),
  },
  {
    name: "Acrobat",
    icon: (
      <svg width="28" height="27" viewBox="0 0 28 27">
        <rect x="1" y="1" width="26" height="25" fill="#2b0808" stroke="#e01e10" strokeWidth="2" />
        <path
          d="M6 20c3-1 9-9 7.500-14-1-1.500-2 0-1 3 2 5 5 8 9 8 1.500-.5 1-2-2-2-5 0-10 2-13 4-.8.600-.8 1-.5 1z"
          fill="none"
          stroke="#eee"
          strokeWidth="1.400"
        />
      </svg>
    ),
  },
  {
    name: "Artlantis",
    icon: (
      <svg width="28" height="28" viewBox="0 0 28 28">
        <circle cx="9" cy="9" r="7.500" fill="#b5473c" />
        <path d="M4 9a5 5 0 1 1 5 5M7 9a2 2 0 1 1 2 2" fill="none" stroke="#e79a8c" strokeWidth="1.300" />
        <path d="M27 1l-9 20-5-6z" fill="#e8eef5" />
        <path d="M27 1l-6 9-8 6 2 2z" fill="#9fb3c8" />
        <path d="M13 13l5 5L6 28l-3-1z" fill="#f08a3c" />
        <path d="M3 22l4 3-4 2z" fill="#ffd75a" />
      </svg>
    ),
  },
  {
    name: "Archicad",
    icon: (
      <svg width="27" height="28" viewBox="0 0 27 28">
        <rect width="27" height="28" rx="1" fill="#e3f3fa" />
        <path d="M0 0h16Q5 9 2 28H0z" fill="#62d2ee" />
        <path d="M2 28Q5 9 16 0q-7 9-9 28z" fill="#e3f3fa" />
        <path d="M7 28Q8 10 14 3q6 8 8 25z" fill="#14b4e4" />
        <path d="M7 28Q8 10 14 3q-3 9-3 25z" fill="#3cc6ec" />
      </svg>
    ),
  },
  {
    name: "AutoCAD",
    icon: (
      <svg width="30" height="30" viewBox="0 0 30 30">
        <rect width="30" height="30" fill="#f8ddd6" />
        <path d="M0 0h18L0 22z" fill="#fbeae6" />
        <path d="M4 25L12 4h6l7 21h-5l-2-6h-6l-2 6zM13.500 14h4L15.500 8z" fill="#c4272e" />
        <path d="M18 4l7 21h-5L15.500 8z" fill="#8d1a20" />
      </svg>
    ),
  },
  { name: "Certus", icon: <LetterIcon letter="C" color="#e2004f" /> },
  {
    name: "Esplora file",
    icon: (
      <svg width="28" height="24" viewBox="0 0 28 24">
        <path d="M0 0h12l2 3v4H0z" fill="#e29a10" />
        <path d="M0 5h12l2-3h14v19H0z" fill="#ffd566" />
        <path d="M5 23V12h18v11h-5v-6h-8v6z" fill="#3d95dc" />
      </svg>
    ),
  },
  {
    name: "Dropbox",
    icon: (
      <span className="flex h-[30px] w-[30px] items-center justify-center rounded-sm bg-white text-[19px] text-[#0061fe]">
        <FaDropbox />
      </span>
    ),
  },
  {
    name: "Microsoft Store",
    icon: (
      <svg width="29" height="29" viewBox="0 0 29 29">
        <path d="M9.500 8V6q0-5 5-5t5 5v2M12 8V5q0-4 4-4" fill="none" stroke="#ddd" strokeWidth="1.500" />
        <path d="M0 7h29v22H0z" fill="#fff" />
        <path d="M8 12h6v6H8z" fill="#f25022" />
        <path d="M15 12h6v6h-6z" fill="#7fba00" />
        <path d="M8 19h6v5H8z" fill="#00a4ef" />
        <path d="M15 19h6v5h-6z" fill="#ffb900" />
      </svg>
    ),
  },
  {
    name: "Excel",
    icon: (
      <svg width="29" height="28" viewBox="0 0 29 28">
        <path d="M7 0h11v7H7z" fill="#21a366" />
        <path d="M18 0h11v7H18z" fill="#33c481" />
        <path d="M7 7h11v7H7z" fill="#107c41" />
        <path d="M18 7h11v7H18z" fill="#21a366" />
        <path d="M7 14h11v14H7z" fill="#185c37" />
        <path d="M18 14h11v7H18z" fill="#107c41" />
        <path d="M18 21h11v7H18z" fill="#185c37" />
        <OfficeBadge letter="X" color="#107c41" />
      </svg>
    ),
  },
  {
    name: "Google Earth Pro",
    icon: (
      <svg width="28" height="28" viewBox="0 0 28 28">
        <circle cx="14" cy="14" r="14" fill="#d4d7da" />
        <path d="M4 5q12 1 23 13l-1 4Q14 9 1 10zM0 14q11-1 20 11l-4 2Q9 18 1 18z" fill="#858c95" />
        <path d="M12 0q10 3 14 9-8-7-17-8z" fill="#9aa0a8" />
        <rect x="6" y="20" width="17" height="8" rx="1" fill="#333" />
        <text x="14.500" y="27" textAnchor="middle" fontSize="8" fill="#fff">Pro</text>
      </svg>
    ),
  },
  {
    name: "Chrome",
    icon: (
      <svg width="28" height="28" viewBox="0 0 28 28">
        <circle cx="14" cy="14" r="14" fill="#fbc116" />
        <path d="M14 14L2 7a14 14 0 0 0 10 21l7-12z" fill="#2ba24c" />
        <path d="M14 7h12a14 14 0 0 0-24 0l6 10z" fill="#e33b2e" />
        <circle cx="14" cy="14" r="6.500" fill="#fff" />
        <circle cx="14" cy="14" r="5" fill="#4285f4" />
      </svg>
    ),
  },
  {
    name: "Outlook",
    icon: (
      <svg width="29" height="28" viewBox="0 0 29 28">
        <path d="M9 0h19v14H9z" fill="#0f66b5" />
        <path d="M16 5h6v6h-6z" fill="#28a8ea" />
        <path d="M22 5h6v6h-6z" fill="#50d9ff" />
        <path d="M16 11h12v5H16z" fill="#1483d8" />
        <path d="M7 13l11 7 11-7v14H7z" fill="#1a8fe3" />
        <path d="M7 27l22-13v13z" fill="#36adf0" />
        <OfficeBadge letter="O" color="#0f6cbd" />
      </svg>
    ),
  },
  { name: "PriMus", icon: <LetterIcon letter="P" color="#e2001a" /> },
  { name: "TerMus", icon: <LetterIcon letter="T" color="#1496e0" /> },
  {
    name: "Word",
    icon: (
      <svg width="29" height="28" viewBox="0 0 29 28">
        <path d="M7 0h22v7H7z" fill="#41a5ee" />
        <path d="M7 7h22v7H7z" fill="#2b7cd3" />
        <path d="M7 14h22v7H7z" fill="#185abd" />
        <path d="M7 21h22v7H7z" fill="#103f91" />
        <OfficeBadge letter="W" color="#185abd" />
      </svg>
    ),
  },
  {
    name: "WhatsApp",
    icon: (
      <svg width="27" height="28" viewBox="0 0 27 28">
        <path d="M0 28l2-7a13.500 13.500 0 1 1 5 5z" fill="#fff" />
        <path d="M3 25l1.500-5a11.200 11.200 0 1 1 3.500 3.500z" fill="#25c13f" />
        <path
          d="M8.500 7.500q1.500-1.500 2.500.5l1 2.500-1 1.500q1.500 3 4.500 4l1.500-1.500 3 1.500q1 1-.5 2.500-2 2-5 .8-6-2.300-7.500-7.500-.5-2.500 1.500-4.300z"
          fill="#fff"
        />
      </svg>
    ),
  },
  {
    name: "Trading",
    icon: (
      <svg width="20" height="28" viewBox="0 0 20 28">
        <path d="M4.500 9v17" stroke="#7a2626" />
        <path d="M15.500 0v28" stroke="#187a18" />
        <path d="M.5 13.500h7v10h-7z" fill="#f47070" stroke="#c23030" />
        <path d="M12 6.500h7.500v15H12z" fill="#5be85b" stroke="#22b022" />
      </svg>
    ),
  },
];

function taskClass(name: string) {
  if (name === "Word") return "w-[61px] border-[#76b9ed] bg-[#64666a]";
  if (name === "Chrome" || name === "Trading") return "mx-[5px] w-[51px] border-[#76b9ed]";
  return "w-[61px] border-transparent";
}

function TaskBar() {
  return (
    <div className="flex h-[50px] shrink-0 bg-linear-to-r from-[#3a434b] via-[#414246] to-[#38404a] text-white">
      <button aria-label="Start" className="flex w-[60px] shrink-0 items-center justify-center">
        <svg width="20" height="20" viewBox="0 0 20 20" fill="#fff">
          <path d="M0 3l8-1.200v7.700H0zM9 1.600L20 0v9.500H9zM0 10.500h8v7.700L0 17zM9 10.500h11V20L9 18.400z" />
        </svg>
      </button>
      <label className="flex w-[430px] shrink-0 items-center border border-[#bfbfbf] bg-[#f2f2f2] pl-[14px]">
        <svg width="21" height="21" viewBox="0 0 21 21" fill="none" stroke="#111" strokeWidth="1.500">
          <circle cx="13" cy="7.500" r="6.500" />
          <path d="M8.500 12.500L.8 20" />
        </svg>
        <input
          type="text"
          aria-label="Ricerca"
          placeholder="Scrivi qui per eseguire la ricerca"
          className="ml-[14px] min-w-0 flex-1 bg-transparent text-lg outline-none placeholder:text-[#333]"
        />
      </label>
      <div className="ml-1 flex shrink-0">
        {taskApps.map((app) => (
          <button
            key={app.name}
            aria-label={app.name}
            className={`flex items-center justify-center border-b-3 ${taskClass(app.name)}`}
          >
            {app.icon}
          </button>
        ))}
      </div>
      <div className="ml-auto flex items-center">
        <svg width="16" height="9" viewBox="0 0 16 9" fill="none" stroke="#fff" strokeWidth="1.400">
          <path d="M.5 8.500L8 1l7.500 7.500" />
        </svg>
        <svg className="ml-[13px]" width="19" height="11" viewBox="0 0 19 11" fill="none" stroke="#fff">
          <path d="M.5.5h16v10H.5zM17 3.500h1.500v4H17" strokeWidth="1.200" />
          <path d="M2.500 2.500h3v6h-3z" fill="#fff" />
        </svg>
        <svg className="ml-[13px]" width="16" height="16" viewBox="0 0 16 16" fill="none" stroke="#ddd" strokeWidth="1.300">
          <path d="M1 15Q1 1 15 1M4.500 15Q5 5 15 4.500M8 15q0-6.500 7-7M11 15q0-3.500 4-4" />
          <circle cx="14" cy="14" r="1.500" fill="#fff" stroke="none" />
        </svg>
        <svg className="ml-[11px]" width="21" height="18" viewBox="0 0 21 18" fill="none" stroke="#fff" strokeWidth="1.200">
          <path d="M.6 6h3L8 2v14l-4.400-4h-3zM11 6.500q2 2.500 0 5M14 4q4 5 0 10M17 1.500q6 7.500 0 15" />
        </svg>
        <span className="ml-4 text-sm">ITA</span>
        <div className="ml-[17px] w-[80px] text-center text-sm leading-[23px]">
          <div>21:28</div>
          <div>24/03/2020</div>
        </div>
        <button aria-label="Notifiche" className="ml-[21px]">
          <svg width="20" height="20" viewBox="0 0 20 20" fill="none" stroke="#fff" strokeWidth="1.300">
            <path d="M.7.7h18.600v15.500h-6l-3.300 3-3.300-3h-6z" />
          </svg>
        </button>
        <span className="mr-[5px] ml-[25px] h-[50px] w-px bg-[#7a7f86]" />
      </div>
    </div>
  );
}

/* ================= APP ================= */

export default function App() {
  return (
    <div className="flex h-screen flex-col overflow-hidden bg-[#e6e6e6] font-['Open_Sans','Noto_Sans',sans-serif]">
      <div className="shrink-0 bg-[#2b579a]">
        <TitleBar />
        <TabBar />
      </div>
      <div className="shrink-0">
        <Ribbon />
      </div>
      <UpdateBar />
      <WorkArea />
      <StatusBar />
      <TaskBar />
    </div>
  );
}
